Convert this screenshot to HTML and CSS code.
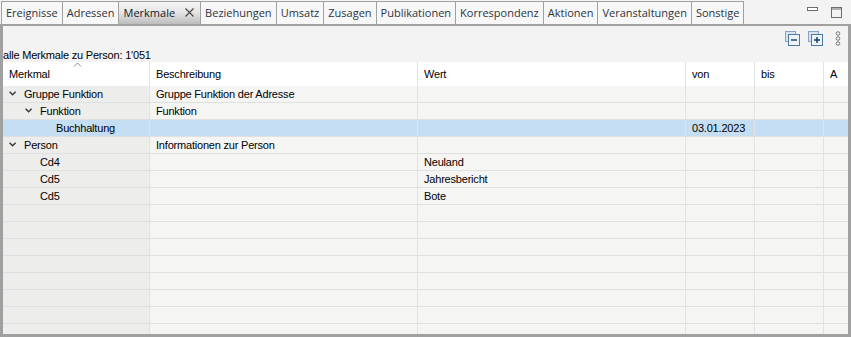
FILE: index.html
```html
<!DOCTYPE html>
<html lang="de">
<head>
    <meta charset="UTF-8">
    <title>Merkmale</title>
    <link rel="stylesheet" href="styles.css">
</head>
<body>
    <div class="window">
        <div class="tabbar">
            <ul class="tabs">
                <li class="tab">Ereignisse</li>
                <li class="tab">Adressen</li>
                <li class="tab active">Merkmale
                    <svg class="tab-close" width="9" height="9" viewBox="0 0 9 9"><path d="M0.5 0.5L8.5 8.5M8.5 0.5L0.5 8.5" stroke="#444" stroke-width="1.1" fill="none"/></svg>
                </li>
                <li class="tab">Beziehungen</li>
                <li class="tab">Umsatz</li>
                <li class="tab">Zusagen</li>
                <li class="tab">Publikationen</li>
                <li class="tab">Korrespondenz</li>
                <li class="tab">Aktionen</li>
                <li class="tab">Veranstaltungen</li>
                <li class="tab">Sonstige</li>
            </ul>
            <div class="win-ctrls">
                <!-- minimize -->
                <svg width="11" height="4" viewBox="0 0 11 4"><rect x="0.5" y="0.5" width="10" height="3" fill="#fff" stroke="#6d6d6d"/></svg>
                <!-- maximize -->
                <svg width="11" height="11" viewBox="0 0 11 11"><rect x="0.5" y="0.5" width="10" height="10" fill="none" stroke="#6d6d6d"/><path d="M1 2h9" stroke="#6d6d6d"/></svg>
            </div>
        </div>

        <div class="panel">
            <div class="toolbar">
                <!-- collapse all -->
                <svg class="tool" width="15" height="15" viewBox="0 0 15 15">
                    <rect x="0.5" y="0.5" width="10" height="10" fill="#d9e4ef" stroke="#86a4c2"/>
                    <rect x="3.5" y="3.5" width="11" height="11" fill="#eef3f8" stroke="#4c79a6"/>
                    <path d="M6 9h6" stroke="#0e3a69" stroke-width="1.4"/>
                </svg>
                <!-- expand all -->
                <svg class="tool" width="15" height="15" viewBox="0 0 15 15">
                    <rect x="0.5" y="0.5" width="10" height="10" fill="#d9e4ef" stroke="#86a4c2"/>
                    <rect x="3.5" y="3.5" width="11" height="11" fill="#eef3f8" stroke="#4c79a6"/>
                    <path d="M6 9h6M9 6v6" stroke="#0e3a69" stroke-width="1.4"/>
                </svg>
                <!-- view menu -->
                <svg class="tool menu" width="6" height="15" viewBox="0 0 6 15">
                    <circle cx="3" cy="2.5" r="1.8" fill="none" stroke="#7a7a7a"/>
                    <circle cx="3" cy="7.5" r="1.8" fill="none" stroke="#7a7a7a"/>
                    <circle cx="3" cy="12.5" r="1.8" fill="none" stroke="#7a7a7a"/>
                </svg>
            </div>

            <div class="caption">alle Merkmale zu Person: 1'051</div>

            <table class="grid">
                <colgroup>
                    <col class="c-name">
                    <col class="c-desc">
                    <col class="c-value">
                    <col class="c-date">
                    <col class="c-date">
                    <col class="c-flag">
                </colgroup>
                <thead>
                    <tr>
                        <th class="sorted">Merkmal
                            <svg class="sort" width="9" height="5" viewBox="0 0 9 5"><path d="M1 4.5L4.5 1L8 4.5" stroke="#888" fill="none"/></svg>
                        </th>
                        <th>Beschreibung</th>
                        <th>Wert</th>
                        <th>von</th>
                        <th>bis</th>
                        <th class="last">A</th>
                    </tr>
                </thead>
                <tbody>
                    <tr>
                        <td class="name"><div class="node"><svg class="twisty" width="15" height="16" viewBox="0 0 15 16"><path d="M0.6 5.8L3.6 8.8L6.6 5.8" stroke="#3a3a3a" stroke-width="1.5" fill="none"/></svg>Gruppe Funktion</div></td>
                        <td>Gruppe Funktion der Adresse</td>
                        <td></td><td></td><td></td><td class="last"></td>
                    </tr>
                    <tr>
                        <td class="name"><div class="node lvl1"><svg class="twisty" width="15" height="16" viewBox="0 0 15 16"><path d="M0.6 5.8L3.6 8.8L6.6 5.8" stroke="#3a3a3a" stroke-width="1.5" fill="none"/></svg>Funktion</div></td>
                        <td>Funktion</td>
                        <td></td><td></td><td></td><td class="last"></td>
                    </tr>
                    <tr class="selected">
                        <td class="name"><div class="node lvl2 leaf">Buchhaltung</div></td>
                        <td></td>
                        <td></td>
                        <td>03.01.2023</td>
                        <td></td><td class="last"></td>
                    </tr>
                    <tr>
                        <td class="name"><div class="node"><svg class="twisty" width="15" height="16" viewBox="0 0 15 16"><path d="M0.6 5.8L3.6 8.8L6.6 5.8" stroke="#3a3a3a" stroke-width="1.5" fill="none"/></svg>Person</div></td>
                        <td>Informationen zur Person</td>
                        <td></td><td></td><td></td><td class="last"></td>
                    </tr>
                    <tr>
                        <td class="name"><div class="node lvl1 leaf">Cd4</div></td>
                        <td></td>
                        <td>Neuland</td>
                        <td></td><td></td><td class="last"></td>
                    </tr>
                    <tr>
                        <td class="name"><div class="node lvl1 leaf">Cd5</div></td>
                        <td></td>
                        <td>Jahresbericht</td>
                        <td></td><td></td><td class="last"></td>
                    </tr>
                    <tr>
                        <td class="name"><div class="node lvl1 leaf">Cd5</div></td>
                        <td></td>
                        <td>Bote</td>
                        <td></td><td></td><td class="last"></td>
                    </tr>
                    <tr class="empty"><td class="name"></td><td></td><td></td><td></td><td></td><td class="last"></td></tr>
                    <tr class="empty"><td class="name"></td><td></td><td></td><td></td><td></td><td class="last"></td></tr>
                    <tr class="empty"><td class="name"></td><td></td><td></td><td></td><td></td><td class="last"></td></tr>
                    <tr class="empty"><td class="name"></td><td></td><td></td><td></td><td></td><td class="last"></td></tr>
                    <tr class="empty"><td class="name"></td><td></td><td></td><td></td><td></td><td class="last"></td></tr>
                    <tr class="empty"><td class="name"></td><td></td><td></td><td></td><td></td><td class="last"></td></tr>
                    <tr class="empty"><td class="name"></td><td></td><td></td><td></td><td></td><td class="last"></td></tr>
                    <tr class="empty"><td class="name"></td><td></td><td></td><td></td><td></td><td class="last"></td></tr>
                </tbody>
            </table>
        </div>
    </div>
</body>
</html>
```

FILE: styles.css
```css
html, body {
    margin: 0;
    height: 100%;
}
body {
    background: #f3f3f3;
    font-family: "Liberation Sans", Arial, sans-serif;
    font-size: 11px;
    color: #000;
    overflow: hidden;
}
.window {
    height: 337px;
    display: flex;
    flex-direction: column;
}

/* tab strip */
.tabbar {
    display: flex;
    height: 24px;
    padding-top: 1px;
    box-sizing: border-box;
}
.tabs {
    display: flex;
    list-style: none;
    margin: 0;
    padding: 0 0 0 1px;
    height: 23px;
}
.tab {
    display: flex;
    align-items: center;
    height: 23px;
    box-sizing: border-box;
    padding: 0 4px 1px;
    border-top: 1px solid #a0a0a0;
    border-right: 1px solid #a0a0a0;
    background: #f7f7f7;
    font-family: "Open Sans", sans-serif;
    font-size: 11px;
    color: #2d3440;
    white-space: nowrap;
}
.tab:first-child {
    border-left: 1px solid #a0a0a0;
}
.tab.active {
    padding: 0 6px 1px 4px;
    background: linear-gradient(#f4f4f4, #e6e6e6 45%, #bdbdbd);
    color: #101828;
}
.tab-close {
    margin-left: 10px;
}
.win-ctrls {
    margin-left: auto;
    display: flex;
    align-items: flex-start;
    gap: 13px;
    padding: 6px 9px 0 0;
}

/* view panel */
.panel {
    flex: 1;
    display: flex;
    flex-direction: column;
    border: 3px solid #a0a0a0;
    border-top-width: 2px;
    background: #f3f3f3;
    overflow: hidden;
}
.toolbar {
    display: flex;
    justify-content: flex-end;
    align-items: flex-start;
    height: 21px;
    box-sizing: border-box;
    padding: 5px 7px 0 0;
    gap: 8px;
}
.toolbar .menu {
    margin-left: 4px;
}
.caption {
    height: 16px;
    line-height: 18px;
    letter-spacing: -0.2px;
    white-space: nowrap;
}

/* table */
.grid {
    width: 845px;
    table-layout: fixed;
    border-collapse: separate;
    border-spacing: 0;
}
.c-name { width: 147px; }
.c-desc { width: 268px; }
.c-value { width: 268px; }
.c-date { width: 69px; }
.c-flag { width: 24px; }
.grid th {
    position: relative;
    height: 24px;
    padding: 0 6px;
    background: #fff;
    border-right: 1px solid #e3e3e3;
    font-weight: normal;
    text-align: left;
    letter-spacing: -0.2px;
}
.grid th.last,
.grid td.last {
    border-right: none;
}
.sort {
    position: absolute;
    top: 0;
    left: 70px;
}
.grid td {
    height: 16px;
    padding: 0 6px;
    line-height: 16px;
    background: #f5f5f4;
    border-right: 1px solid #e2e2e2;
    border-bottom: 1px solid #e0e0e0;
    white-space: nowrap;
    overflow: hidden;
    letter-spacing: -0.2px;
}
.grid td.name {
    background: #ededec;
}
.grid tr.selected td {
    background: #c5def4;
}
.node {
    display: flex;
    align-items: center;
    height: 16px;
}
.node.lvl1 {
    padding-left: 16px;
}
.node.lvl2 {
    padding-left: 32px;
}
.node.leaf {
    margin-left: 15px;
}
.twisty {
    flex: none;
    display: block;
}
```
